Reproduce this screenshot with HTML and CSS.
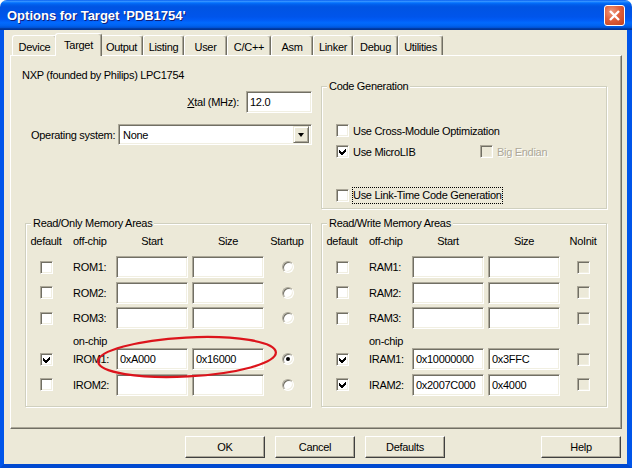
FILE: index.html
```html
<!doctype html>
<html lang="en">
  <head>
    <meta charset="UTF-8" />
    <title>Options for Target 'PDB1754'</title>
    <link rel="stylesheet" href="styles.css">
  </head>
  <body>
    <div class="window">
      <div class="titlebar">
        <span class="title">Options for Target 'PDB1754'</span>
        <span class="close">
          <svg width="19" height="19" viewBox="0 0 19 19">
            <path d="M5 5 L14 14 M14 5 L5 14" stroke="#fff" stroke-width="2.4" fill="none" />
          </svg>
        </span>
      </div>

      <div class="client">
        <div class="tabs">
          <span class="tab">Device</span>
          <span class="tab active">Target</span>
          <span class="tab">Output</span>
          <span class="tab">Listing</span>
          <span class="tab">User</span>
          <span class="tab">C/C++</span>
          <span class="tab">Asm</span>
          <span class="tab">Linker</span>
          <span class="tab">Debug</span>
          <span class="tab">Utilities</span>
        </div>

        <div class="panel">
          <div class="top-row">
            <div class="chip-info">
              <div class="device">NXP (founded by Philips) LPC1754</div>
              <div class="xtal-row">
                <span><u>X</u>tal (MHz):</span>
                <span class="edit xtal">12.0</span>
              </div>
              <div class="os-row">
                <span>Operating system:</span>
                <span class="combo">
                  <span class="combo-text">None</span>
                  <span class="combo-btn"><span class="arrow"></span></span>
                </span>
              </div>
            </div>

            <fieldset class="group codegen">
              <legend>Code Generation</legend>
              <div class="check-row first">
                <span class="check"></span>
                <span>Use Cross-Module Optimization</span>
              </div>
              <div class="check-row second">
                <span class="check-item">
                  <span class="check"><svg width="9" height="9" viewBox="0 0 9 9"><polygon points="1,3 3.5,5.5 8,1 8,4 3.5,8.5 1,6" /></svg></span>
                  <span>Use MicroLIB</span>
                </span>
                <span class="check disabled"></span>
                <span class="disabled-text">Big Endian</span>
              </div>
              <div class="check-row third">
                <span class="check"></span>
                <span class="focus">Use Link-Time Code Generation</span>
              </div>
            </fieldset>
          </div>

          <div class="memory-row">
            <fieldset class="group memory">
              <legend>Read/Only Memory Areas</legend>
              <div class="mem-row head">
                <span class="center">default</span>
                <span class="name">off-chip</span>
                <span class="center">Start</span>
                <span class="center size-head">Size</span>
                <span class="center">Startup</span>
              </div>
              <div class="mem-row area">
                <span class="check"></span>
                <span class="name">ROM1:</span>
                <span class="edit"></span>
                <span class="edit size"></span>
                <span class="radio"></span>
              </div>
              <div class="mem-row area">
                <span class="check"></span>
                <span class="name">ROM2:</span>
                <span class="edit"></span>
                <span class="edit size"></span>
                <span class="radio"></span>
              </div>
              <div class="mem-row area">
                <span class="check"></span>
                <span class="name">ROM3:</span>
                <span class="edit"></span>
                <span class="edit size"></span>
                <span class="radio"></span>
              </div>
              <div class="mem-row sub">
                <span></span>
                <span class="name">on-chip</span>
              </div>
              <div class="mem-row area onchip">
                <span class="check"><svg width="9" height="9" viewBox="0 0 9 9"><polygon points="1,3 3.5,5.5 8,1 8,4 3.5,8.5 1,6" /></svg></span>
                <span class="name">IROM1:</span>
                <span class="edit">0xA000</span>
                <span class="edit size">0x16000</span>
                <span class="radio selected"></span>
              </div>
              <div class="mem-row area">
                <span class="check"></span>
                <span class="name">IROM2:</span>
                <span class="edit"></span>
                <span class="edit size"></span>
                <span class="radio"></span>
              </div>
            </fieldset>

            <fieldset class="group memory">
              <legend>Read/Write Memory Areas</legend>
              <div class="mem-row head">
                <span class="center">default</span>
                <span class="name">off-chip</span>
                <span class="center">Start</span>
                <span class="center size-head">Size</span>
                <span class="center">NoInit</span>
              </div>
              <div class="mem-row area">
                <span class="check"></span>
                <span class="name">RAM1:</span>
                <span class="edit"></span>
                <span class="edit size"></span>
                <span class="check disabled"></span>
              </div>
              <div class="mem-row area">
                <span class="check"></span>
                <span class="name">RAM2:</span>
                <span class="edit"></span>
                <span class="edit size"></span>
                <span class="check disabled"></span>
              </div>
              <div class="mem-row area">
                <span class="check"></span>
                <span class="name">RAM3:</span>
                <span class="edit"></span>
                <span class="edit size"></span>
                <span class="check disabled"></span>
              </div>
              <div class="mem-row sub">
                <span></span>
                <span class="name">on-chip</span>
              </div>
              <div class="mem-row area onchip">
                <span class="check"><svg width="9" height="9" viewBox="0 0 9 9"><polygon points="1,3 3.5,5.5 8,1 8,4 3.5,8.5 1,6" /></svg></span>
                <span class="name">IRAM1:</span>
                <span class="edit">0x10000000</span>
                <span class="edit size">0x3FFC</span>
                <span class="check disabled"></span>
              </div>
              <div class="mem-row area">
                <span class="check"><svg width="9" height="9" viewBox="0 0 9 9"><polygon points="1,3 3.5,5.5 8,1 8,4 3.5,8.5 1,6" /></svg></span>
                <span class="name">IRAM2:</span>
                <span class="edit">0x2007C000</span>
                <span class="edit size">0x4000</span>
                <span class="check disabled"></span>
              </div>
            </fieldset>
          </div>
        </div>

        <div class="buttons">
          <span class="btn">OK</span>
          <span class="btn">Cancel</span>
          <span class="btn">Defaults</span>
          <span class="btn help">Help</span>
        </div>
      </div>

      <!-- red marker drawn over the IROM1 row -->
      <svg class="marker" width="196" height="54" viewBox="0 0 196 54">
        <ellipse cx="97" cy="27" rx="89" ry="19.5" transform="rotate(-3 97 27)" fill="none" stroke="#dc141c" stroke-width="2.2" />
      </svg>
    </div>
  </body>
</html>
```

FILE: styles.css
```css
* {
  box-sizing: border-box;
}

body {
  margin: 0;
  background: #fff;
  font-family: "Liberation Sans", Arial, sans-serif;
  font-size: 11px;
  letter-spacing: -0.3px;
  color: #000;
}

.window {
  position: relative;
  width: 632px;
  height: 468px;
  display: flex;
  flex-direction: column;
  background: #ece9d8;
  border-radius: 7px 7px 0 0;
  overflow: hidden;
}

/* title bar */
.titlebar {
  flex: none;
  height: 30px;
  display: flex;
  align-items: center;
  justify-content: space-between;
  padding: 0 7px 0 7px;
  background: linear-gradient(
    to bottom,
    #0058ee 0%,
    #3a93ff 4%,
    #288eff 6%,
    #127dff 8%,
    #036ffc 10%,
    #0262ee 14%,
    #0057e5 20%,
    #0054e3 24%,
    #0055eb 56%,
    #005bf5 66%,
    #026afe 76%,
    #0062ef 86%,
    #0052d6 92%,
    #0040ab 94%,
    #003092 100%
  );
}

.title {
  color: #fff;
  font-weight: bold;
  font-size: 13px;
  letter-spacing: 0;
  text-shadow: 1px 1px 0 #0f1f7a;
  margin-top: 1px;
}

.close {
  width: 21px;
  height: 21px;
  display: flex;
  align-items: center;
  justify-content: center;
  border: 1px solid #fff;
  border-radius: 3px;
  background: radial-gradient(circle at 35% 30%, #ee9a7e 0%, #e0603c 45%, #c2401c 100%);
  margin-top: 1px;
}

/* client area */
.client {
  flex: 1;
  display: flex;
  flex-direction: column;
  padding-top: 3px;
  border-left: 4px solid #0055ea;
  border-right: 5px solid #0055ea;
  border-bottom: 4px solid #0049d0;
}

.tabs {
  height: 22px;
  display: flex;
  align-items: flex-end;
  padding-left: 8px;
  position: relative;
  z-index: 2;
}

.tab {
  height: 20px;
  display: flex;
  align-items: center;
  justify-content: center;
  padding-top: 2px;
  border: 1px solid;
  border-color: #fff #716f64 transparent #fff;
  border-bottom: none;
  border-radius: 3px 3px 0 0;
  box-shadow: inset -1px 0 0 #aca899;
  white-space: nowrap;
}

.tab:nth-child(1) { width: 45px; }
.tab:nth-child(3) { width: 43px; }
.tab:nth-child(4) { width: 41px; }
.tab:nth-child(5) { width: 43px; }
.tab:nth-child(6) { width: 44px; }
.tab:nth-child(7) { width: 42px; }
.tab:nth-child(8) { width: 40px; }
.tab:nth-child(9) { width: 45px; }
.tab:nth-child(10) { width: 45px; }

.tab.active {
  width: 47px;
  height: 23px;
  margin: 0 -2px -1px;
  padding-top: 0;
  padding-bottom: 1px;
  background: #ece9d8;
  position: relative;
}

.panel {
  height: 374px;
  margin: 0 5px 0 6px;
  padding-top: 13px;
  border: 1px solid;
  border-color: #fff #716f64 #716f64 #fff;
  box-shadow: inset -1px -1px 0 #aca899;
  position: relative;
  z-index: 1;
}

/* upper part */
.top-row {
  display: flex;
  align-items: flex-start;
  gap: 9px;
  padding-left: 11px;
}

.chip-info {
  width: 290px;
  display: flex;
  flex-direction: column;
}

.device {
  line-height: 13px;
}

.xtal-row {
  margin-top: 9px;
  height: 22px;
  display: flex;
  align-items: center;
  justify-content: flex-end;
  gap: 7px;
}

.edit {
  height: 22px;
  line-height: 20px;
  padding-left: 3px;
  background: #fff;
  border: 1px solid;
  border-color: #aca899 #fff #fff #aca899;
  box-shadow: inset 1px 1px 0 #716f64, inset -1px -1px 0 #f1efe2;
  white-space: nowrap;
  overflow: hidden;
}

.xtal {
  width: 66px;
}

.os-row {
  margin-top: 11px;
  display: flex;
  align-items: center;
  justify-content: space-between;
  padding-left: 9px;
}

.combo {
  width: 194px;
  height: 21px;
  display: flex;
  align-items: center;
  justify-content: space-between;
  padding: 2px;
  background: #fff;
  border: 1px solid;
  border-color: #aca899 #fff #fff #aca899;
  box-shadow: inset 1px 1px 0 #716f64, inset -1px -1px 0 #f1efe2;
}

.combo-text {
  padding-left: 2px;
}

.combo-btn {
  width: 16px;
  height: 17px;
  display: flex;
  align-items: center;
  justify-content: center;
  background: #ece9d8;
  border: 1px solid;
  border-color: #ece9d8 #716f64 #716f64 #ece9d8;
  box-shadow: inset 1px 1px 0 #fff, inset -1px -1px 0 #aca899;
}

.arrow {
  width: 0;
  height: 0;
  border-left: 3.5px solid transparent;
  border-right: 3.5px solid transparent;
  border-top: 4px solid #000;
}

/* group boxes */
.group {
  margin: 0;
  padding: 0;
  min-width: 0;
  width: 286px;
  border: 1px solid #d0d0bf;
  box-shadow: 1px 1px 0 #fff, inset 1px 1px 0 #fff;
}

.group legend {
  margin-left: 5px;
  padding: 0 2px;
  line-height: 13px;
  background: #ece9d8;
}

.codegen {
  margin-top: 11px;
  padding: 0 0 4px 0;
}

.check-row {
  display: flex;
  align-items: center;
  gap: 4px;
  height: 13px;
  margin-left: 14px;
}

.check-row.first {
  margin-top: 31px;
}

.check-row.second {
  margin-top: 8px;
}

.check-row.third {
  margin-top: 29px;
  height: 17px;
}

.check-item {
  width: 140px;
  display: flex;
  align-items: center;
  gap: 4px;
}

.check {
  width: 13px;
  height: 13px;
  flex: none;
  display: flex;
  align-items: center;
  justify-content: center;
  background: #fff;
  border: 1px solid;
  border-color: #aca899 #fff #fff #aca899;
  box-shadow: inset 1px 1px 0 #716f64, inset -1px -1px 0 #f1efe2;
}

.check svg {
  display: block;
  shape-rendering: crispEdges;
}

.check.disabled {
  background: #ece9d8;
}

.disabled-text {
  color: #aca899;
  text-shadow: 1px 1px 0 #fff;
}

.focus {
  border: 1px dotted #000;
  padding: 1px 0;
  line-height: 13px;
  margin-left: -1px;
}

.radio {
  width: 12px;
  height: 12px;
  margin-left: 18px;
  display: flex;
  align-items: center;
  justify-content: center;
  border-radius: 50%;
  background: #fff;
  border: 1px solid;
  border-color: #aca899 #fff #fff #aca899;
  box-shadow: inset 1px 1px 0 #716f64, inset -1px -1px 0 #f1efe2;
}

.radio.selected::after {
  content: "";
  width: 4px;
  height: 4px;
  border-radius: 50%;
  background: #000;
}

/* memory areas */
.memory-row {
  display: flex;
  gap: 10px;
  margin-top: 8px;
  padding-left: 14px;
}

.memory {
  padding: 0 0 10px;
}

.mem-row {
  display: grid;
  grid-template-columns: 40px 50px 72px 76px 1fr;
  align-items: center;
}

.mem-row.head {
  margin-top: 5px;
  line-height: 13px;
}

.mem-row.area {
  margin-top: 3.5px;
  height: 22px;
}

.mem-row.head + .mem-row.area {
  margin-top: 8px;
}

.mem-row.sub {
  margin-top: 6px;
  line-height: 13px;
}

.mem-row.sub + .mem-row.area {
  margin-top: 0;
}

.mem-row .center {
  text-align: center;
}

.mem-row .size-head {
  padding-left: 4px;
}

.mem-row .name {
  padding-left: 7px;
}

.mem-row > .check {
  justify-self: center;
}

.mem-row > .check:last-child {
  justify-self: start;
  margin-left: 17px;
}

.mem-row .edit {
  width: 72px;
  padding-left: 3px;
}

.mem-row .edit.size {
  justify-self: end;
}

/* buttons */
.buttons {
  display: flex;
  gap: 10px;
  margin-top: 7px;
  padding: 0 6px 0 181px;
}

.btn {
  width: 80px;
  height: 22px;
  display: flex;
  align-items: center;
  justify-content: center;
  background: #ece9d8;
  border: 1px solid;
  border-color: #fff #404040 #404040 #fff;
  box-shadow: inset -1px -1px 0 #aca899;
}

.btn.help {
  margin-left: auto;
}

.marker {
  position: absolute;
  left: 90px;
  top: 330px;
  z-index: 5;
}
```
